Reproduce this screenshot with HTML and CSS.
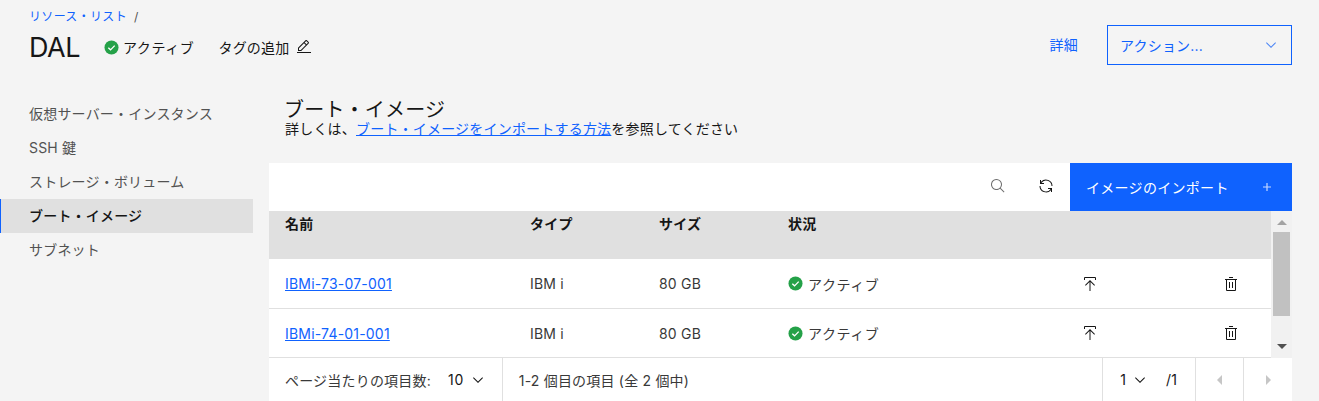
FILE: index.html
```html
<!DOCTYPE html>
<html lang="ja">
<head>
    <meta charset="UTF-8">
    <title>DAL</title>
    <link rel="stylesheet" href="styles.css">
</head>
<body>

    <!-- ヘッダー -->
    <header class="page-header">
        <div class="header-left">
            <div class="breadcrumb"><a href="#">リソース・リスト</a><span class="crumb-sep">/</span></div>
            <div class="title-row">
                <h1 class="title">DAL</h1>
                <span class="status header-status">
                    <svg class="status-icon" viewBox="0 0 16 16"><circle cx="8" cy="8" r="7.5" fill="#24a148"/><path d="M4.6 8.2l2.4 2.3 4.4-4.5" fill="none" stroke="#fff" stroke-width="1.4"/></svg>
                    アクティブ
                </span>
                <span class="add-tag">タグの追加
                    <svg class="icon" viewBox="0 0 32 32"><path fill="#161616" d="M2 26h28v2H2zM25.4 9c.8-.8.8-2 0-2.8l-3.6-3.6c-.8-.8-2-.8-2.8 0l-15 15V24h6.4l15-15zm-5-5L24 7.6l-3 3L17.4 7l3-3zM6 22v-3.6l10-10 3.6 3.6-10 10H6z"/></svg>
                </span>
            </div>
        </div>
        <div class="header-right">
            <a class="detail-link" href="#">詳細</a>
            <div class="action-select">
                <span>アクション...</span>
                <svg class="icon" viewBox="0 0 32 32"><path fill="#4d86f5" d="M16 22L6 12l1.4-1.4 8.6 8.6 8.6-8.6L26 12z"/></svg>
            </div>
        </div>
    </header>

    <div class="page-body">
        <!-- サイドメニュー -->
        <nav class="side-nav">
            <a class="nav-item" href="#">仮想サーバー・インスタンス</a>
            <a class="nav-item" href="#">SSH 鍵</a>
            <a class="nav-item" href="#">ストレージ・ボリューム</a>
            <a class="nav-item active" href="#">ブート・イメージ</a>
            <a class="nav-item" href="#">サブネット</a>
        </nav>

        <main class="content">
            <div class="content-head">
                <h2 class="content-title">ブート・イメージ</h2>
                <p class="content-desc">詳しくは、<a href="#">ブート・イメージをインポートする方法</a>を参照してください</p>
            </div>

            <div class="toolbar">
                <button class="tool-btn">
                    <svg class="icon" viewBox="0 0 32 32"><path fill="#6f6f6f" d="M29 27.586l-7.552-7.552a11.018 11.018 0 1 0-1.414 1.414L27.586 29zM4 13a9 9 0 1 1 9 9 9.01 9.01 0 0 1-9-9z"/></svg>
                </button>
                <button class="tool-btn">
                    <svg class="icon" viewBox="0 0 32 32"><path fill="#161616" d="M12 10H6.78A11 11 0 0 1 27 16h2A13 13 0 0 0 6 7.68V4H4v8h8zM20 22h5.22A11 11 0 0 1 5 16H3a13 13 0 0 0 23 8.32V28h2v-8h-8z"/></svg>
                </button>
                <button class="import-btn">
                    <span>イメージのインポート</span>
                    <svg class="plus" viewBox="0 0 10 10"><path d="M5 1v8M1 5h8" stroke="#c6d8ff" stroke-width="1.2"/></svg>
                </button>
            </div>

            <div class="table-wrap">
                <div class="table">
                    <div class="row head-row">
                        <div>名前</div>
                        <div>タイプ</div>
                        <div>サイズ</div>
                        <div>状況</div>
                    </div>
                    <div class="row data-row">
                        <div><a href="#">IBMi-73-07-001</a></div>
                        <div>IBM i</div>
                        <div>80 GB</div>
                        <div class="status">
                            <svg class="status-icon" viewBox="0 0 16 16"><circle cx="8" cy="8" r="7.5" fill="#24a148"/><path d="M4.6 8.2l2.4 2.3 4.4-4.5" fill="none" stroke="#fff" stroke-width="1.4"/></svg>
                            アクティブ
                        </div>
                        <div class="cell-icon">
                            <svg class="icon" viewBox="0 0 32 32"><path fill="#161616" d="M6 18l1.41 1.41L15 11.83V30h2V11.83l7.59 7.58L26 18 16 8 6 18zM6 8V4h20v4h2V4a2 2 0 0 0-2-2H6a2 2 0 0 0-2 2v4z"/></svg>
                        </div>
                        <div class="cell-icon">
                            <svg class="icon" viewBox="0 0 32 32"><path fill="#161616" d="M12 12h2v12h-2zM18 12h2v12h-2zM4 6v2h2v20a2 2 0 0 0 2 2h16a2 2 0 0 0 2-2V8h2V6zm4 22V8h16v20zM12 2h8v2h-8z"/></svg>
                        </div>
                    </div>
                    <div class="row data-row">
                        <div><a href="#">IBMi-74-01-001</a></div>
                        <div>IBM i</div>
                        <div>80 GB</div>
                        <div class="status">
                            <svg class="status-icon" viewBox="0 0 16 16"><circle cx="8" cy="8" r="7.5" fill="#24a148"/><path d="M4.6 8.2l2.4 2.3 4.4-4.5" fill="none" stroke="#fff" stroke-width="1.4"/></svg>
                            アクティブ
                        </div>
                        <div class="cell-icon">
                            <svg class="icon" viewBox="0 0 32 32"><path fill="#161616" d="M6 18l1.41 1.41L15 11.83V30h2V11.83l7.59 7.58L26 18 16 8 6 18zM6 8V4h20v4h2V4a2 2 0 0 0-2-2H6a2 2 0 0 0-2 2v4z"/></svg>
                        </div>
                        <div class="cell-icon">
                            <svg class="icon" viewBox="0 0 32 32"><path fill="#161616" d="M12 12h2v12h-2zM18 12h2v12h-2zM4 6v2h2v20a2 2 0 0 0 2 2h16a2 2 0 0 0 2-2V8h2V6zm4 22V8h16v20zM12 2h8v2h-8z"/></svg>
                        </div>
                    </div>
                </div>
                <div class="scrollbar">
                    <span class="arrow-up"></span>
                    <span class="thumb"></span>
                    <span class="arrow-down"></span>
                </div>
            </div>

            <div class="pager">
                <div class="pager-size">
                    <span>ページ当たりの項目数:</span>
                    <span class="pager-num">10</span>
                    <svg class="icon pager-chevron" viewBox="0 0 32 32"><path fill="#161616" d="M16 22L6 12l1.4-1.4 8.6 8.6 8.6-8.6L26 12z"/></svg>
                </div>
                <div class="pager-range">1-2 個目の項目 (全 2 個中)</div>
                <div class="pager-page">
                    <span>1</span>
                    <svg class="icon pager-chevron" viewBox="0 0 32 32"><path fill="#161616" d="M16 22L6 12l1.4-1.4 8.6 8.6 8.6-8.6L26 12z"/></svg>
                    <span class="page-total">/1</span>
                </div>
                <div class="pager-btn"><span class="tri-left"></span></div>
                <div class="pager-btn"><span class="tri-right"></span></div>
            </div>
        </main>
    </div>

</body>
</html>
```

FILE: styles.css
```css
body {
    font-family: 'Inter', 'Noto Sans CJK JP', sans-serif;
    font-size: 14px;
    letter-spacing: 0.2px;
    margin: 0;
    padding: 0;
    height: 401px;
    overflow: hidden;
    background-color: #f4f4f4;
    color: #161616;
}

a {
    color: #0f62fe;
}

.icon {
    width: 16px;
    height: 16px;
    flex-shrink: 0;
}

/* ヘッダー */
.page-header {
    display: flex;
    justify-content: space-between;
    height: 97px;
    padding: 7px 27px 0 29px;
    box-sizing: border-box;
}

.breadcrumb {
    font-size: 12px;
    letter-spacing: 0.32px;
    line-height: 20px;
}

.breadcrumb a {
    text-decoration: none;
}

.crumb-sep {
    margin-left: 7px;
    color: #525252;
}

.title-row {
    display: flex;
    align-items: center;
    height: 40px;
}

.title {
    margin: 0 24px 0 0;
    font-size: 27px;
    font-weight: 400;
    letter-spacing: -0.5px;
}

.status {
    display: flex;
    align-items: center;
    gap: 5px;
    color: #393939;
    letter-spacing: 0.6px;
}

.header-status {
    gap: 4px;
    color: #161616;
}

.status-icon {
    width: 15px;
    height: 15px;
}

.add-tag {
    display: flex;
    align-items: center;
    gap: 7px;
    margin-left: 24px;
}

.header-right {
    display: flex;
    align-items: flex-start;
    padding-top: 18px;
}

.detail-link {
    line-height: 40px;
    margin-right: 29px;
    text-decoration: none;
}

.action-select {
    display: flex;
    align-items: center;
    justify-content: space-between;
    width: 185px;
    height: 40px;
    padding: 0 12px;
    box-sizing: border-box;
    border: 1px solid #0f62fe;
    color: #0f62fe;
}

/* サイドメニュー */
.page-body {
    display: flex;
}

.side-nav {
    width: 253px;
    margin-right: 16px;
    flex-shrink: 0;
}

.nav-item {
    display: block;
    height: 34px;
    line-height: 34px;
    padding-left: 29px;
    color: #525252;
    text-decoration: none;
}

.nav-item.active {
    padding-left: 28px;
    border-left: 1px solid #0f62fe;
    background-color: #e0e0e0;
    color: #161616;
    font-weight: 500;
}

/* コンテンツ */
.content {
    width: 1023px;
}

.content-head {
    height: 66px;
    padding: 1px 0 0 16px;
    box-sizing: border-box;
}

.content-title {
    margin: 0 0 0 -1px;
    font-size: 20px;
    font-weight: 400;
    line-height: 24px;
}

.content-desc {
    margin: 0;
    line-height: 14px;
}

.toolbar {
    display: flex;
    justify-content: flex-end;
    height: 48px;
    background-color: #fff;
}

.tool-btn {
    width: 48px;
    padding: 0;
    border: none;
    background: none;
}

.import-btn {
    display: flex;
    align-items: center;
    justify-content: space-between;
    width: 222px;
    padding: 0 20px 0 16px;
    border: none;
    background-color: #0f62fe;
    color: #fff;
    font: inherit;
    letter-spacing: 0.3px;
}

.plus {
    width: 10px;
    height: 10px;
}

.table-wrap {
    display: flex;
    height: 147px;
}

.table {
    flex: 1;
}

.row {
    display: grid;
    grid-template-columns: 261px 129px 129px 294px 141px 48px;
    box-sizing: border-box;
}

.row > div:first-child {
    padding-left: 16px;
}

.head-row {
    height: 48px;
    padding-top: 4px;
    background-color: #e0e0e0;
    font-weight: 600;
}

.head-row > div {
    line-height: 18px;
}

.data-row {
    height: 49px;
    align-items: center;
    background-color: #fff;
    border-bottom: 1px solid #e0e0e0;
    color: #393939;
}

.head-row + .data-row {
    height: 50px;
}

.cell-icon {
    display: flex;
}

.scrollbar {
    display: flex;
    flex-direction: column;
    align-items: center;
    width: 21px;
    background-color: #f1f1f1;
}

.thumb {
    width: 17px;
    height: 84px;
    margin: 7px 0 28px;
    background-color: #c1c1c1;
}

.arrow-up {
    margin-top: 9px;
    border-left: 5px solid transparent;
    border-right: 5px solid transparent;
    border-bottom: 5px solid #a3a3a3;
}

.arrow-down {
    border-left: 5px solid transparent;
    border-right: 5px solid transparent;
    border-top: 5px solid #505050;
}

/* ページネーション */
.pager {
    display: flex;
    align-items: stretch;
    height: 43px;
    background-color: #fff;
    color: #393939;
}

.pager > div {
    display: flex;
    align-items: center;
    box-sizing: border-box;
}

.pager-size {
    width: 234px;
    padding-left: 16px;
    border-right: 1px solid #e0e0e0;
}

.pager-num {
    margin-left: 17px;
    color: #161616;
    letter-spacing: 0.8px;
}

.pager-chevron {
    margin-left: 6px;
}

.pager-range {
    width: 601px;
    padding-left: 16px;
    border-right: 1px solid #e0e0e0;
}

.pager-page {
    width: 93px;
    padding-left: 17px;
    border-right: 1px solid #e0e0e0;
    color: #161616;
}

.page-total {
    margin-left: 18px;
}

.pager-btn {
    width: 48px;
    justify-content: center;
    border-right: 1px solid #e0e0e0;
}

.pager-btn:last-child {
    border-right: none;
}

.tri-left, .tri-right {
    border-top: 5px solid transparent;
    border-bottom: 5px solid transparent;
}

.tri-left {
    border-right: 5px solid #c6c6c6;
}

.tri-right {
    border-left: 5px solid #c6c6c6;
}
```
